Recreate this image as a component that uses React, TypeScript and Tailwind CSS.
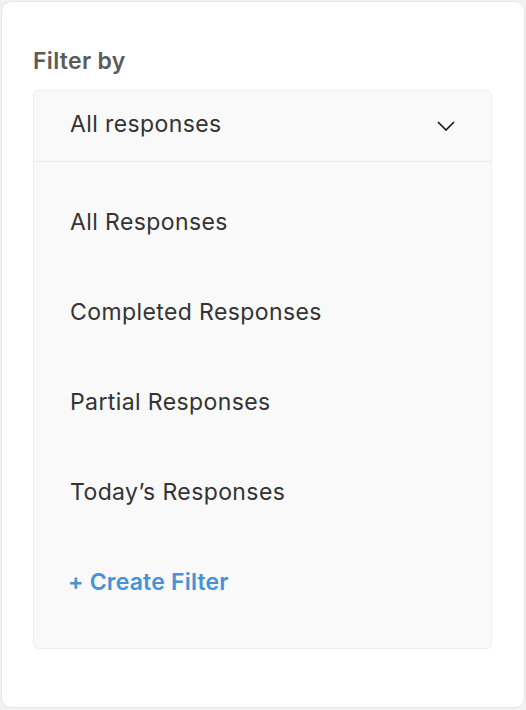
const options = ['All Responses', 'Completed Responses', 'Partial Responses', 'Today\u2019s Responses'];

export default function App() {
  return (
    <div className="h-[710px] w-[526px] bg-[#f2f2f2] p-px" style={{ fontFamily: 'Inter, "Open Sans", sans-serif' }}>
      <div className="h-[707px] rounded-[10px] border border-[#e6e6e6] bg-white pl-[31px] pt-[43px]">
        <h2 className="text-[23px] font-semibold leading-[32px] tracking-[0.3px] text-[#5b5b5b]">Filter by</h2>
        <div className="mt-[13px] h-[559px] w-[459px] rounded-[6px] border border-[#efefef] bg-[#f9f9f9]">
          <div className="flex h-[71px] items-center justify-between border-b border-[#ebebeb] pb-[4px] pl-[36px] pr-[36px]">
            <span className="text-[23px] tracking-[0.4px] text-[#333333]">All responses</span>
            <svg width="18" height="10" viewBox="0 0 18 10" fill="none" className="mt-[3px]">
              <polyline points="1,1 9,9 17,1" stroke="#111111" strokeWidth="1.6" />
            </svg>
          </div>
          <ul className="pt-[16px]">
            {options.map((o) => (
              <li key={o} className="flex h-[90px] items-center pb-[2px] pl-[36px] text-[23px] tracking-[0.4px] text-[#333333]">
                {o}
              </li>
            ))}
            <li className="flex h-[90px] items-center pb-[2px] pl-[34px] text-[23px] font-semibold tracking-[0.2px] text-[#4592d8]">
              + Create Filter
            </li>
          </ul>
        </div>
      </div>
    </div>
  );
}
